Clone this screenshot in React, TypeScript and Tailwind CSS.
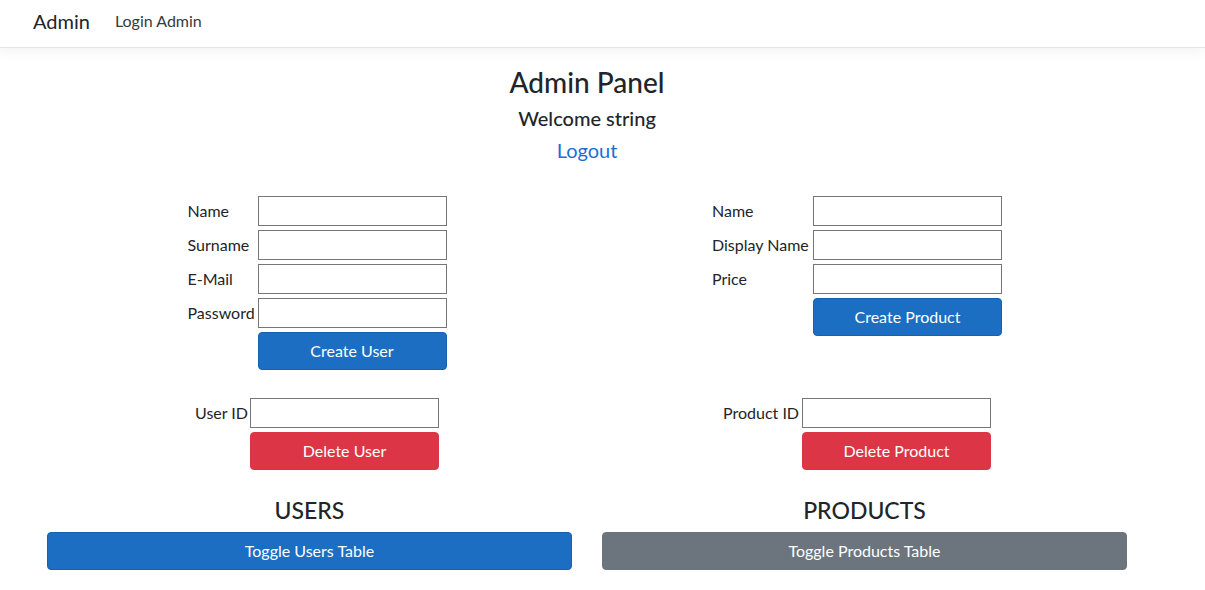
import React from "react";

const font = "font-['Segoe_UI','Lato','Liberation_Sans',sans-serif]";

function Field({ label, w }: { label: string; w: string }) {
  return (
    <div className="flex items-center h-[30px]">
      <label className={`${w} shrink-0 whitespace-nowrap text-[16px] text-[#212529]`}>{label}</label>
      <input className="w-[189px] h-[30px] border border-[#767676] bg-white px-1 text-[15px] outline-none" />
    </div>
  );
}

export default function App() {
  return (
    <div className={`${font} min-h-screen bg-white text-[#212529]`}>
      <nav className="h-[48px] flex items-center pb-[6px] border-b border-[#e5e5e5] shadow-[0_4px_12px_rgba(0,0,0,0.05)]">
        <span className="ml-[33px] text-[20px] leading-none">Admin</span>
        <a className="ml-[25px] text-[16px] text-[#343a40] leading-none">Login Admin</a>
      </nav>

      <main className="ml-[47px] w-[1080px]">
        <div className="flex flex-col items-center pt-[16px]">
          <h3 className="text-[28px] font-medium leading-[36px]">Admin Panel</h3>
          <h5 className="mt-[6px] text-[20px] font-medium leading-[24px]">Welcome string</h5>
          <a className="mt-[8px] text-[20px] leading-[24px] text-[#1b6fd1]">Logout</a>
        </div>

        {/* create forms */}
        <div className="grid grid-cols-2 mt-[34px]">
          <div className="flex justify-center">
            <div className="flex flex-col gap-[4px]">
              <Field label="Name" w="w-[70px]" />
              <Field label="Surname" w="w-[70px]" />
              <Field label="E-Mail" w="w-[70px]" />
              <Field label="Password" w="w-[70px]" />
              <div className="pl-[70px]">
                <button className="w-[189px] h-[38px] rounded-[4px] bg-[#1b6ec2] border border-[#1861ac] text-white text-[16px]">
                  Create User
                </button>
              </div>
            </div>
          </div>
          <div className="flex justify-center">
            <div className="flex flex-col gap-[4px]">
              <Field label="Name" w="w-[101px]" />
              <Field label="Display Name" w="w-[101px]" />
              <Field label="Price" w="w-[101px]" />
              <div className="pl-[101px]">
                <button className="w-[189px] h-[38px] rounded-[4px] bg-[#1b6ec2] border border-[#1861ac] text-white text-[16px]">
                  Create Product
                </button>
              </div>
            </div>
          </div>
        </div>

        {/* delete forms */}
        <div className="grid grid-cols-2 mt-[28px]">
          <div className="flex justify-center">
            <div className="flex flex-col gap-[4px]">
              <div className="flex items-center h-[30px]">
                <label className="w-[55px] shrink-0 whitespace-nowrap pr-[5px] text-right text-[16px]">User ID</label>
                <input className="w-[189px] h-[30px] border border-[#767676] bg-white px-1 outline-none" />
              </div>
              <div className="pl-[55px]">
                <button className="w-[189px] h-[38px] rounded-[4px] bg-[#dc3545] border border-[#dc3545] text-white text-[16px]">
                  Delete User
                </button>
              </div>
            </div>
          </div>
          <div className="flex justify-center">
            <div className="flex flex-col gap-[4px]">
              <div className="flex items-center h-[30px]">
                <label className="w-[79px] shrink-0 whitespace-nowrap pr-[4px] text-right text-[16px]">Product ID</label>
                <input className="w-[189px] h-[30px] border border-[#767676] bg-white px-1 outline-none" />
              </div>
              <div className="pl-[79px]">
                <button className="w-[189px] h-[38px] rounded-[4px] bg-[#dc3545] border border-[#dc3545] text-white text-[16px]">
                  Delete Product
                </button>
              </div>
            </div>
          </div>
        </div>

        {/* tables */}
        <div className="flex gap-[30px] mt-[26px]">
          <div className="flex-1 flex flex-col items-center">
            <h4 className="text-[23px] font-medium leading-[29px]">USERS</h4>
            <button className="mt-[7px] w-full h-[38px] rounded-[4px] bg-[#1b6ec2] border border-[#1861ac] text-white text-[16px]">
              Toggle Users Table
            </button>
          </div>
          <div className="flex-1 flex flex-col items-center">
            <h4 className="text-[23px] font-medium leading-[29px]">PRODUCTS</h4>
            <button className="mt-[7px] w-full h-[38px] rounded-[4px] bg-[#6c757d] border border-[#6c757d] text-white text-[16px]">
              Toggle Products Table
            </button>
          </div>
        </div>
      </main>
    </div>
  );
}
